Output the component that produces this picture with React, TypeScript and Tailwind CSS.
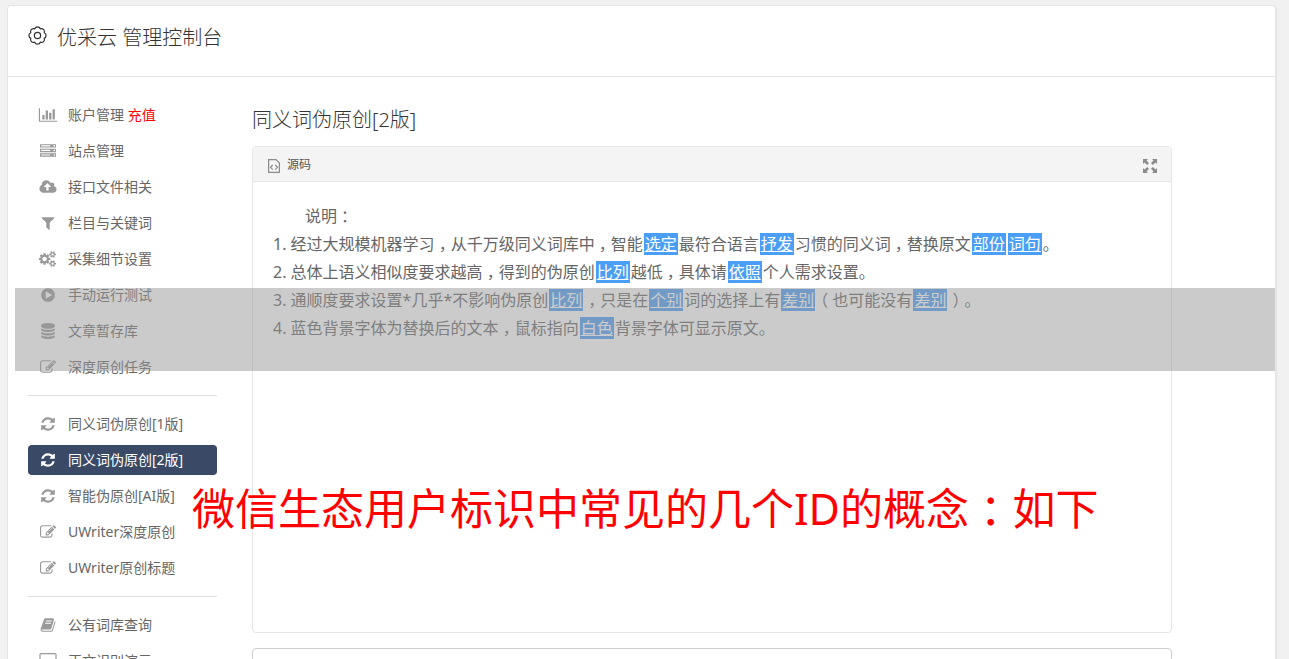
import { ReactNode } from 'react';

type IconName =
  | 'chart'
  | 'server'
  | 'upload'
  | 'filter'
  | 'cogs'
  | 'play'
  | 'database'
  | 'edit'
  | 'refresh'
  | 'book'
  | 'desktop';

interface NavItem {
  label: string;
  icon: IconName;
  badge?: string;
  active?: boolean;
}

const ICONS: Record<IconName, { width: number; path: string }> = {
  chart: {
    width: 2048,
    path: 'M640 896v512h-256v-512h256zm384-512v1024h-256v-1024h256zm1024 1152v128h-2048v-1536h128v1408h1920zm-640-896v768h-256v-768h256zm384-384v1152h-256v-1152h256z',
  },
  server: {
    width: 1792,
    path: 'M128 1408h1024v-128h-1024v128zm0-512h1024v-128h-1024v128zm1568 448q0-40-28-68t-68-28-68 28-28 68 28 68 68 28 68-28 28-68zm-1568-960h1024v-128h-1024v128zm1568 448q0-40-28-68t-68-28-68 28-28 68 28 68 68 28 68-28 28-68zm0-512q0-40-28-68t-68-28-68 28-28 68 28 68 68 28 68-28 28-68zm96 832v384h-1792v-384h1792zm0-512v384h-1792v-384h1792zm0-512v384h-1792v-384h1792z',
  },
  upload: {
    width: 1920,
    path: 'M1280 864q0-14-9-23l-352-352q-9-9-23-9t-23 9l-351 351q-10 12-10 24 0 14 9 23t23 9h224v352q0 13 9.5 22.5t22.5 9.5h192q13 0 22.5-9.5t9.5-22.5v-352h224q13 0 22.5-9.5t9.5-22.5zm640 288q0 159-112.5 271.5t-271.5 112.5h-1088q-185 0-316.5-131.5t-131.5-316.5q0-130 70-240t188-165q-2-30-2-43 0-212 150-362t362-150q156 0 285.5 87t188.5 231q71-62 166-62 106 0 181 75t75 181q0 76-41 138 130 31 213.5 135.5t83.5 238.5z',
  },
  filter: {
    width: 1792,
    path: 'M1595 295q17 41-14 70l-493 493v742q0 42-39 59-13 5-25 5-27 0-45-19l-256-256q-19-19-19-45v-486l-493-493q-31-29-14-70 17-39 59-39h1280q42 0 59 39z',
  },
  cogs: {
    width: 1920,
    path: 'M832 896q0-106-75-181t-181-75-181 75-75 181 75 181 181 75 181-75 75-181zm768 512q0-52-38-90t-90-38-90 38-38 90q0 53 37.5 90.5t90.5 37.5 90.5-37.5 37.5-90.5zm0-1024q0-52-38-90t-90-38-90 38-38 90q0 53 37.5 90.5t90.5 37.5 90.5-37.5 37.5-90.5zm-384 421v185q0 10-7 19.5t-16 10.5l-155 24q-11 35-32 76 34 48 90 115 7 11 7 20 0 12-7 19-23 30-82.5 89.5t-78.5 59.5q-11 0-21-7l-115-90q-37 19-77 31-11 108-23 155-7 24-30 24h-186q-11 0-20-7.5t-10-17.5l-23-153q-34-10-75-31l-118 89q-7 7-20 7-11 0-21-8-144-133-144-160 0-9 7-19 10-14 41-53t47-61q-23-44-35-82l-152-24q-10-1-17-9.5t-7-19.5v-185q0-10 7-19.5t16-10.5l155-24q11-35 32-76-34-48-90-115-7-11-7-20 0-12 7-20 22-30 82-89t79-59q11 0 21 7l115 90q34-18 77-32 11-108 23-154 7-24 30-24h186q11 0 20 7.5t10 17.5l23 153q34 10 75 31l118-89q8-7 20-7 11 0 21 8 144 133 144 160 0 9-7 19-12 16-42 54t-45 60q23 48 34 82l152 23q10 2 17 10.5t7 19.5zm640 533v140q0 16-149 31-12 27-30 52 51 113 51 138 0 4-4 7-122 71-124 71-8 0-46-47t-52-68q-20 2-30 2t-30-2q-14 21-52 68t-46 47q-2 0-124-71-4-3-4-7 0-25 51-138-18-25-30-52-149-15-149-31v-140q0-16 149-31 13-29 30-52-51-113-51-138 0-4 4-7 4-2 35-20t59-34 30-16q8 0 46 46.5t52 67.5q20-2 30-2t30 2q51-71 92-112l6-2q4 0 124 70 4 3 4 7 0 25-51 138 17 23 30 52 149 15 149 31zm0-1024v140q0 16-149 31-12 27-30 52 51 113 51 138 0 4-4 7-122 71-124 71-8 0-46-47t-52-68q-20 2-30 2t-30-2q-14 21-52 68t-46 47q-2 0-124-71-4-3-4-7 0-25 51-138-18-25-30-52-149-15-149-31v-140q0-16 149-31 13-29 30-52-51-113-51-138 0-4 4-7 4-2 35-20t59-34 30-16q8 0 46 46.5t52 67.5q20-2 30-2t30 2q51-71 92-112l6-2q4 0 124 70 4 3 4 7 0 25-51 138 17 23 30 52 149 15 149 31z',
  },
  play: {
    width: 1792,
    path: 'M896 128q209 0 385.5 103t279.5 279.5 103 385.5-103 385.5-279.5 279.5-385.5 103-385.5-103-279.5-279.5-103-385.5 103-385.5 279.5-279.5 385.5-103zm384 823q32-18 32-55t-32-55l-544-320q-31-19-64-1-32 19-32 56v640q0 37 32 56 16 8 32 8 17 0 32-9z',
  },
  database: {
    width: 1792,
    path: 'M896 768q237 0 443-43t325-127v170q0 69-103 128t-280 93.5-385 34.5-385-34.5-280-93.5-103-128v-170q119 84 325 127t443 43zm0 768q237 0 443-43t325-127v170q0 69-103 128t-280 93.5-385 34.5-385-34.5-280-93.5-103-128v-170q119 84 325 127t443 43zm0-384q237 0 443-43t325-127v170q0 69-103 128t-280 93.5-385 34.5-385-34.5-280-93.5-103-128v-170q119 84 325 127t443 43zm0-1152q208 0 385 34.5t280 93.5 103 128v128q0 69-103 128t-280 93.5-385 34.5-385-34.5-280-93.5-103-128v-128q0-69 103-128t280-93.5 385-34.5z',
  },
  edit: {
    width: 1792,
    path: 'M888 1184l116-116-152-152-116 116v56h96v96h56zm440-720q-16-16-33 1l-350 350q-17 17-1 33t33-1l350-350q17-17 1-33zm80 594v190q0 119-84.5 203.5t-203.5 84.5h-832q-119 0-203.5-84.5t-84.5-203.5v-832q0-119 84.5-203.5t203.5-84.5h832q63 0 117 25 15 7 18 23 3 17-9 29l-49 49q-14 14-32 8-23-6-45-6h-832q-66 0-113 47t-47 113v832q0 66 47 113t113 47h832q66 0 113-47t47-113v-126q0-13 9-22l64-64q15-15 35-7t20 29zm-96-738l288 288-672 672h-288v-288zm444 132l-92 92-288-288 92-92q28-28 68-28t68 28l152 152q28 28 28 68t-28 68z',
  },
  refresh: {
    width: 1792,
    path: 'M1639 1056q0 5-1 7-64 268-268 434.5t-478 166.5q-146 0-282.5-55t-243.5-157l-129 129q-19 19-45 19t-45-19-19-45v-448q0-26 19-45t45-19h448q26 0 45 19t19 45-19 45l-137 137q71 66 161 102t187 36q134 0 250-65t186-179q11-17 53-117 8-23 30-23h192q13 0 22.5 9.5t9.5 22.5zm25-800v448q0 26-19 45t-45 19h-448q-26 0-45-19t-19-45 19-45l138-138q-148-137-349-137-134 0-250 65t-186 179q-11 17-53 117-8 23-30 23h-199q-13 0-22.5-9.5t-9.5-22.5v-7q65-268 270-434.5t480-166.5q146 0 284 55.5t245 156.5l130-129q19-19 45-19t45 19 19 45z',
  },
  book: {
    width: 1792,
    path: 'M1703 478q40 57 18 129l-275 906q-19 64-76.5 107.5t-122.5 43.5h-923q-77 0-148.5-53.5t-99.5-131.5q-24-67-2-127 0-4 3-27t4-37q1-8-3-21.5t-3-19.5q2-11 8-21t16.5-23.5 16.5-23.5q23-38 45-91.5t30-91.5q3-10 .5-30t-.5-28q3-11 17-28t17-23q21-36 42-92t25-90q1-9-2.5-32t.5-28q4-13 22-30.5t22-22.5q19-26 42.5-84.5t27.5-96.5q1-8-3-25.5t-2-26.5q2-8 9-18t18-23 17-21q8-12 16.5-30.5t15-35 16-36 19.5-32 26.5-23.5 36-11.5 47.5 5.5l-1 3q38-9 51-9h761q74 0 114 56t18 130l-274 906q-36 119-71.5 153.5t-128.5 34.5h-869q-27 0-38 15-11 16-1 43 24 70 144 70h923q29 0 56-15.5t35-41.5l300-987q7-22 5-57 38 15 59 43zm-1064 2q-4 13 2 22.5t20 9.5h608q13 0 25.5-9.5t16.5-22.5l21-64q4-13-2-22.5t-20-9.5h-608q-13 0-25.5 9.5t-16.5 22.5zm-83 256q-4 13 2 22.5t20 9.5h608q13 0 25.5-9.5t16.5-22.5l21-64q4-13-2-22.5t-20-9.5h-608q-13 0-25.5 9.5t-16.5 22.5z',
  },
  desktop: {
    width: 1920,
    path: 'M1792 992v-832q0-13-9.5-22.5t-22.5-9.5h-1600q-13 0-22.5 9.5t-9.5 22.5v832q0 13 9.5 22.5t22.5 9.5h1600q13 0 22.5-9.5t9.5-22.5zm128-832v1088q0 66-47 113t-113 47h-544q0 37 16 77.5t32 71 16 43.5q0 26-19 45t-45 19h-512q-26 0-45-19t-19-45q0-14 16-44t32-70 16-78h-544q-66 0-113-47t-47-113v-1088q0-66 47-113t113-47h1600q66 0 113 47t47 113z',
  },
};

const NAV_GROUPS: NavItem[][] = [
  [
    { label: '账户管理', icon: 'chart', badge: '充值' },
    { label: '站点管理', icon: 'server' },
    { label: '接口文件相关', icon: 'upload' },
    { label: '栏目与关键词', icon: 'filter' },
    { label: '采集细节设置', icon: 'cogs' },
    { label: '手动运行测试', icon: 'play' },
    { label: '文章暂存库', icon: 'database' },
    { label: '深度原创任务', icon: 'edit' },
  ],
  [
    { label: '同义词伪原创[1版]', icon: 'refresh' },
    { label: '同义词伪原创[2版]', icon: 'refresh', active: true },
    { label: '智能伪原创[AI版]', icon: 'refresh' },
    { label: 'UWriter深度原创', icon: 'edit' },
    { label: 'UWriter原创标题', icon: 'edit' },
  ],
  [
    { label: '公有词库查询', icon: 'book' },
    { label: '正文识别演示', icon: 'desktop' },
  ],
];

// Replaced words are wrapped in {braces}
const NOTES = [
  '经过大规模机器学习，从千万级同义词库中，智能{选定}最符合语言{抒发}习惯的同义词，替换原文{部份}{词句}。',
  '总体上语义相似度要求越高，得到的伪原创{比列}越低，具体请{依照}个人需求设置。',
  '通顺度要求设置*几乎*不影响伪原创{比列}，只是在{个别}词的选择上有{差别}（也可能没有{差别}）。',
  '蓝色背景字体为替换后的文本，鼠标指向{白色}背景字体可显示原文。',
];

function NavIcon({ name }: { name: IconName }) {
  const { width, path } = ICONS[name];
  return (
    <svg className="h-4 w-5 shrink-0" viewBox={`0 0 ${width} 1792`} fill="currentColor" aria-hidden="true">
      <path d={path} />
    </svg>
  );
}

// Half-width punctuation with even padding, so that it sits in the middle of its cell
function Punctuated({ text, padding = 'px-1' }: { text: string; padding?: string }) {
  return (
    <>
      {text.split(/([，：（）])/).map((part, i) =>
        /^[，：（）]$/.test(part) ? (
          <span key={i} className={`[font-feature-settings:'halt'] ${padding}`}>
            {part}
          </span>
        ) : (
          part
        ),
      )}
    </>
  );
}

function renderNote(note: string): ReactNode[] {
  return note.split(/(\{[^}]+\})/).map((part, i) =>
    part.startsWith('{') ? (
      <mark key={i} className="mx-px bg-[#4a9ef5] px-px text-white underline">
        {part.slice(1, -1)}
      </mark>
    ) : (
      <Punctuated key={i} text={part} />
    ),
  );
}

function Sidebar() {
  return (
    <nav className="w-[189px] shrink-0">
      {NAV_GROUPS.map((group, i) => (
        <ul key={i} className={`flex flex-col gap-1.5 ${i > 0 ? 'mt-[13px] border-t border-[#ddd] pt-[13px]' : ''}`}>
          {group.map((item) => (
            <li key={item.label}>
              <a
                href="#"
                className={`flex h-[30px] items-center gap-2.5 rounded pl-2.5 text-sm whitespace-nowrap ${
                  item.active ? 'bg-[#3a4a66] text-white' : 'text-[#666]'
                }`}
              >
                <span className={item.active ? 'text-white' : 'text-[#999]'}>
                  <NavIcon name={item.icon} />
                </span>
                <span>
                  {item.label}
                  {item.badge && <span className="text-[#f00]"> {item.badge}</span>}
                </span>
              </a>
            </li>
          ))}
        </ul>
      ))}
    </nav>
  );
}

function Editor() {
  return (
    <section className="min-w-0 max-w-[920px] flex-1">
      <h2 className="mt-[5px] mb-[11px] text-xl leading-[30px] font-light text-[#333]">同义词伪原创[2版]</h2>
      <div className="min-h-[487px] rounded border border-[#e5e5e5]">
        <div className="flex h-[35px] items-center justify-between border-b border-[#e5e5e5] bg-[#f4f4f4] pt-0.5 pr-3.5 pl-[15px]">
          <button type="button" className="flex items-center gap-[7px] text-xs text-[#555]">
            <svg className="mt-0.5 h-3.5 w-3" viewBox="0 0 12 14" fill="none" stroke="#8c8c8c" strokeWidth="1.2" aria-hidden="true">
              <path d="M.6.6h7.400l3.400 3.400v9.400H.6z" />
              <path d="M4.800 6l-2.300 2.300 2.300 2.300M7.200 6l2.300 2.300-2.300 2.300" />
            </svg>
            源码
          </button>
          <button type="button" aria-label="全屏" className="mt-0.5 text-[#8c8c8c]">
            <svg className="h-3.5 w-3.5" viewBox="0 0 14 14" fill="currentColor" aria-hidden="true">
              <path d="M0 0h5L3.500 1.500 6 4.200 4.200 6 1.500 3.500 0 5zM14 0v5l-1.500-1.500L9.800 6 8 4.200l2.500-2.700L9 0zM0 14V9l1.500 1.500L4.200 8 6 9.800l-2.500 2.700L5 14zM14 14H9l1.500-1.500L8 9.800 9.800 8l2.700 2.500L14 9z" />
            </svg>
          </button>
        </div>
        <div className="px-5 py-5 text-base leading-7 text-[#666]">
          <p className="pl-8">
            <Punctuated text="说明：" />
          </p>
          <ol>
            {NOTES.map((note, i) => (
              <li key={note}>
                {i + 1}. {renderNote(note)}
              </li>
            ))}
          </ol>
        </div>
      </div>
      <textarea aria-label="原文" className="mt-[15px] block h-40 w-full resize-none rounded border border-[#ccc] bg-white p-2" />
    </section>
  );
}

export default function App() {
  return (
    <div className="relative h-screen overflow-hidden bg-[#f1f1f1] pt-[5px] font-['Noto_Sans','Noto_Sans_CJK_SC',sans-serif]">
      <div className="mr-3 ml-[7px] rounded border border-r-2 border-[#e5e5e5] bg-white">
        <header className="flex h-[71px] items-start gap-2.5 border-b border-[#e5e5e5] pt-[17px] pl-5 text-[#333]">
          <svg className="mt-[3px] h-[19px] w-[19px]" viewBox="0 0 20 20" fill="none" stroke="currentColor" strokeWidth="1.3" strokeLinejoin="round" aria-hidden="true">
            <path d="M17.020 7.090A3.100 3.100 0 0 1 17.020 12.910A3.100 3.100 0 0 1 12.910 17.020A3.100 3.100 0 0 1 7.090 17.020A3.100 3.100 0 0 1 2.980 12.910A3.100 3.100 0 0 1 2.980 7.090A3.100 3.100 0 0 1 7.090 2.980A3.100 3.100 0 0 1 12.910 2.980A3.100 3.100 0 0 1 17.020 7.090z" />
            <circle cx="10" cy="10" r="3.300" />
          </svg>
          <h1 className="text-xl leading-[30px] font-light">优采云 管理控制台</h1>
        </header>
        <div className="flex gap-[35px] pt-[23px] pr-5 pl-5">
          <Sidebar />
          <Editor />
        </div>
      </div>

      {/* Caption over the page */}
      <div className="pointer-events-none absolute top-[288px] right-3.5 left-[15px] h-[83px] bg-[#979797]/50" />
      <p className="pointer-events-none absolute top-[477px] left-[192px] text-[43px] leading-[64px] whitespace-nowrap text-[#f00]">
        <Punctuated text="微信生态用户标识中常见的几个ID的概念：如下" padding="px-[11px]" />
      </p>
    </div>
  );
}
